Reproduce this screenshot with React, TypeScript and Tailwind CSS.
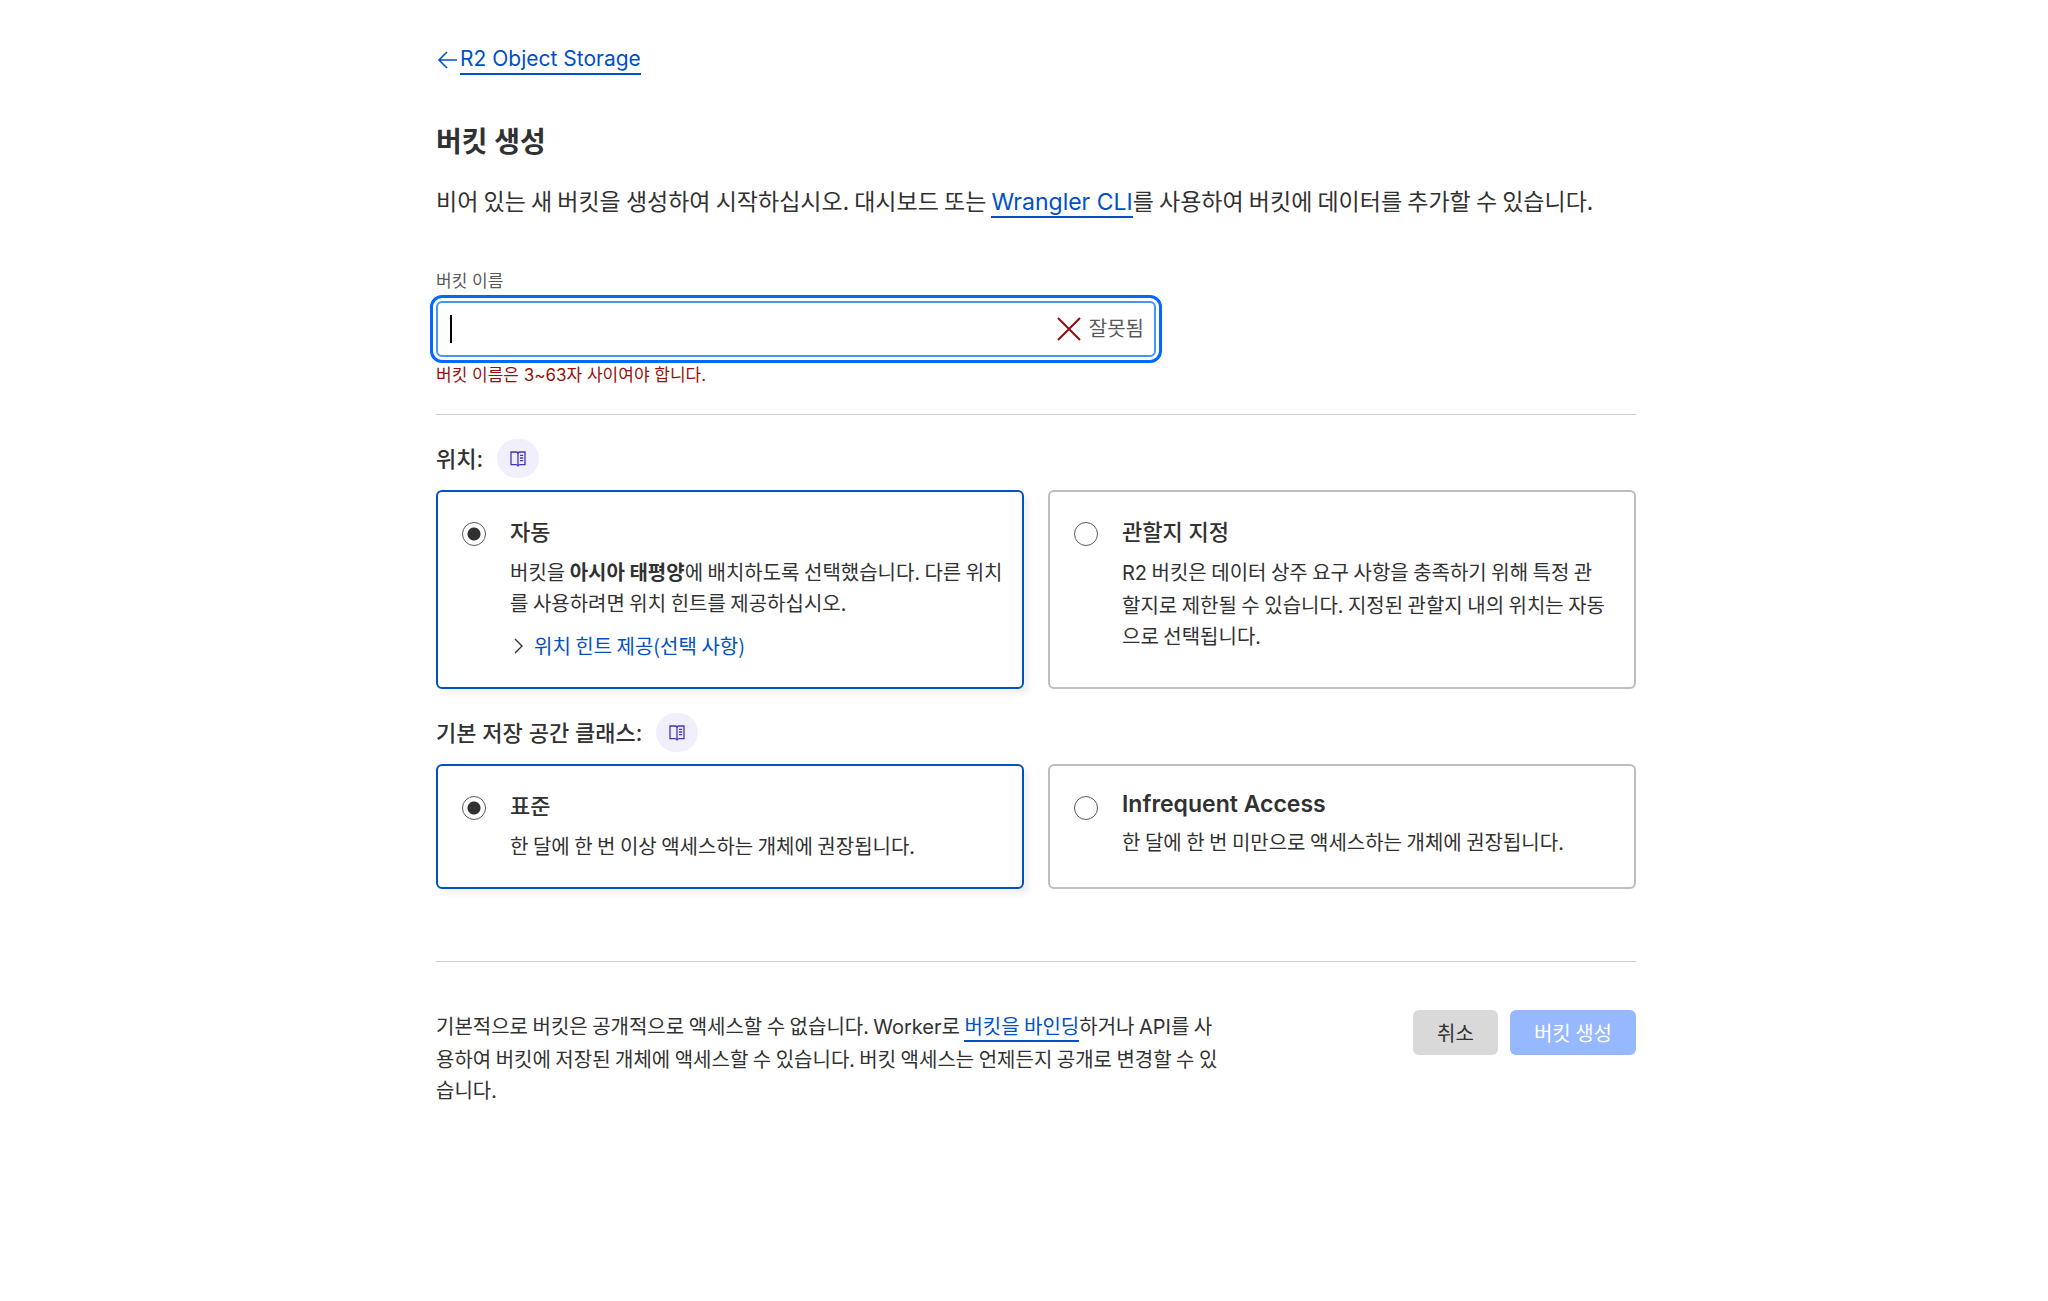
import React from 'react';

interface OptionCardProps {
  id: string;
  name: string;
  title: string;
  latin?: boolean;
  defaultChecked?: boolean;
  children: React.ReactNode;
}

const BookIcon: React.FC = () => (
  <svg width="16" height="18" viewBox="0 0 16 18" fill="none" stroke="#4335b5" strokeWidth="1.3">
    <path d="M8 3C7.5 2.3 6.8 2 6 2H1v12.6h5c.9 0 1.6.4 2 1.2.4-.8 1.1-1.2 2-1.2h5V2h-5c-.8 0-1.5.3-2 1z" />
    <path d="M8 3v12.8M10 5.4h3.2M10 8h3.2M10 10.6h3.2" />
  </svg>
);

// Latin words inside Korean copy
const Latin: React.FC<{ children: React.ReactNode }> = ({ children }) => (
  <span className="font-[Inter,sans-serif]">{children}</span>
);

const SectionHeading: React.FC<{ id: string; text: string }> = ({ id, text }) => (
  <div className="flex items-center gap-3.5">
    <h2 id={id} className="text-[22px] leading-8 font-medium">{text}</h2>
    <a
      href="#docs"
      aria-label={`${text} 문서`}
      className="flex h-[39px] w-[42px] items-center justify-center rounded-full bg-[#f1effc]"
    >
      <BookIcon />
    </a>
  </div>
);

const OptionCard: React.FC<OptionCardProps> = ({ id, name, title, latin, defaultChecked, children }) => (
  <div className="flex gap-6 rounded-md border-2 border-[#bdbdbd] px-6 pt-[22px] pb-[26px] has-checked:border-[#0051c3] has-checked:shadow-[5px_5px_6px_rgba(0,0,0,0.06)]">
    <input
      id={id}
      type="radio"
      name={name}
      defaultChecked={defaultChecked}
      className="mt-2 h-6 w-6 shrink-0 appearance-none rounded-full border border-[#595959] bg-white checked:bg-[radial-gradient(circle,#313131_6px,transparent_7px)]"
    />
    <div className="min-w-0 flex-1">
      <label htmlFor={id} className={latin ? 'block text-[23px] leading-8 font-semibold' : 'block text-[22px] leading-9 font-medium'}>
        {title}
      </label>
      <div className="mt-1.5 -mr-4 font-['Noto_Sans_CJK_KR',sans-serif] text-xl leading-[31px]">{children}</div>
    </div>
  </div>
);

const App: React.FC = () => {
  return (
    <main className="min-h-screen bg-white pl-6 font-[Inter,'Noto_Sans_CJK_KR',sans-serif] text-[#313131]">
      <div className="mx-auto max-w-[1200px] pt-[45px]">
        <a href="#r2" className="inline-flex items-center text-[#0051c3]">
          <svg width="24" height="24" viewBox="0 0 24 24" fill="none" stroke="currentColor" strokeWidth="1.6">
            <path d="M21 12H3M11 4l-8 8 8 8" />
          </svg>
          <span className="border-b-2 border-[#0051c3] text-[21px] leading-7">R2 Object Storage</span>
        </a>

        <h1 className="mt-11 text-[28px] leading-10 font-bold">버킷 생성</h1>
        <p className="mt-5 font-['Noto_Sans_CJK_KR',sans-serif] text-[23px] leading-9">
          비어 있는 새 버킷을 생성하여 시작하십시오. 대시보드 또는{' '}
          <a href="#wrangler" className="border-b-2 border-[#0051c3] font-[Inter,sans-serif] text-[#0051c3]">Wrangler CLI</a>
          를 사용하여 버킷에 데이터를 추가할 수 있습니다.
        </p>

        <form>
          <div className="mt-[49px] max-w-[720px]">
            <label htmlFor="bucket-name" className="block text-[17px] leading-6 text-[#595959]">버킷 이름</label>
            <div className="relative mt-2 flex h-14 items-center rounded-md border-2 border-[#4693ff] pr-2.5 outline-3 outline-offset-3 outline-[#0069ff]">
              <span className="absolute left-3 h-7 w-0.5 bg-black" />
              <input
                id="bucket-name"
                type="text"
                aria-invalid="true"
                aria-describedby="bucket-error"
                className="h-full min-w-0 flex-1 bg-transparent px-3 text-xl outline-none"
              />
              <svg width="24" height="24" viewBox="0 0 24 24" stroke="#8f0d0d" strokeWidth="2">
                <path d="M1 1l22 22M23 1L1 23" />
              </svg>
              <span className="ml-2 text-xl leading-7 text-[#595959]">잘못됨</span>
            </div>
            <p id="bucket-error" className="mt-1.5 text-[17px] leading-6 text-[#97110b]">버킷 이름은 3~63자 사이여야 합니다.</p>
          </div>

          <hr className="mt-[27px] border-[#d0d0d0]" />

          <section className="mt-6">
            <SectionHeading id="location" text="위치:" />
            <div role="radiogroup" aria-labelledby="location" className="mt-3 grid grid-cols-2 gap-6">
              <OptionCard id="location-auto" name="location" title="자동" defaultChecked>
                <p>
                  버킷을 <strong>아시아 태평양</strong>에 배치하도록 선택했습니다. 다른 위치
                  <br />를 사용하려면 위치 힌트를 제공하십시오.
                </p>
                <button type="button" className="mt-3 flex items-center text-[#0051c3]">
                  <svg className="mr-2 text-[#313131]" width="16" height="16" viewBox="0 0 16 16" fill="none" stroke="currentColor" strokeWidth="1.4">
                    <path d="M5 1l7 7-7 7" />
                  </svg>
                  위치 힌트 제공(선택 사항)
                </button>
              </OptionCard>
              <OptionCard id="location-jurisdiction" name="location" title="관할지 지정">
                <p>
                  <Latin>R2</Latin> 버킷은 데이터 상주 요구 사항을 충족하기 위해 특정 관
                  <br />할지로 제한될 수 있습니다. 지정된 관할지 내의 위치는 자동
                  <br />으로 선택됩니다.
                </p>
              </OptionCard>
            </div>
          </section>

          <section className="mt-6">
            <SectionHeading id="storage-class" text="기본 저장 공간 클래스:" />
            <div role="radiogroup" aria-labelledby="storage-class" className="mt-3 grid grid-cols-2 gap-6">
              <OptionCard id="class-standard" name="storage-class" title="표준" defaultChecked>
                <p>한 달에 한 번 이상 액세스하는 개체에 권장됩니다.</p>
              </OptionCard>
              <OptionCard id="class-infrequent" name="storage-class" title="Infrequent Access" latin>
                <p>한 달에 한 번 미만으로 액세스하는 개체에 권장됩니다.</p>
              </OptionCard>
            </div>
          </section>

          <hr className="mt-18 border-[#d0d0d0]" />

          <div className="mt-12 flex items-start justify-between font-['Noto_Sans_CJK_KR',sans-serif] text-xl">
            <p className="w-[66%] leading-[31px]">
              기본적으로 버킷은 공개적으로 액세스할 수 없습니다. <Latin>Worker</Latin>로{' '}
              <a href="#bind" className="border-b-2 border-[#0051c3] text-[#0051c3]">버킷을 바인딩</a>
              하거나 <Latin>API</Latin>를 사용하여 버킷에 저장된 개체에 액세스할 수 있습니다. 버킷 액세스는 언제든지 공개로 변경할 수 있습니다.
            </p>
            <div className="flex gap-3 leading-7">
              <button type="button" className="h-[45px] rounded-md bg-[#d9d9d9] px-6">취소</button>
              <button type="submit" disabled className="h-[45px] rounded-md bg-[#96b8ff] px-6 text-white">버킷 생성</button>
            </div>
          </div>
        </form>
      </div>
    </main>
  );
};

export default App;
